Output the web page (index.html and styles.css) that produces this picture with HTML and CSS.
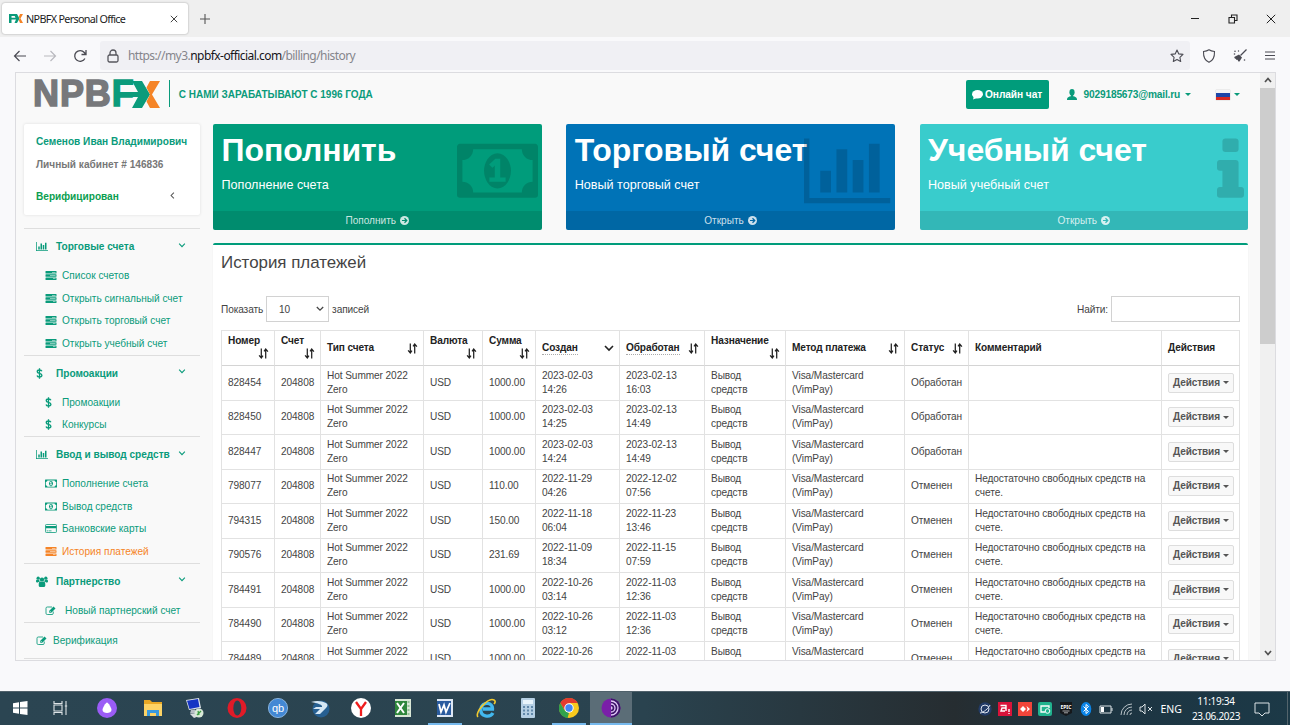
FILE: index.html
```html
<!DOCTYPE html>
<html lang="ru">
<head>
<meta charset="utf-8">
<title>NPBFX Personal Office</title>
<link rel="stylesheet" href="styles.css">
</head>
<body>
<svg class="defs" width="0" height="0">
  <symbol id="bars" viewBox="0 0 2048 1792"><path d="M640 896v512h-256v-512h256zm384-512v1024h-256v-1024h256zm1024 1152v128h-2048v-1536h128v1408h1920zm-640-896v768h-256v-768h256zm384-384v1152h-256v-1152h256z"/></symbol>
  <symbol id="money" viewBox="0 0 1920 1792"><path d="M768 1152h384v-96h-128v-448h-114l-148 137 77 80q42-37 55-57h2v288h-128v96zm512-256q0 70-21 142t-59.5 134-101.5 101-138 39-138-39-101.5-101-59.5-134-21-142 21-142 59.5-134 101.5-101 138-39 138 39 101.5 101 59.5 134 21 142zm512 256v-512q-106 0-181-75t-75-181h-1152q0 106-75 181t-181 75v512q106 0 181 75t75 181h1152q0-106 75-181t181-75zm128-832v1152q0 26-19 45t-45 19h-1792q-26 0-45-19t-19-45v-1152q0-26 19-45t45-19h1792q26 0 45 19t19 45z"/></symbol>
  <symbol id="info" viewBox="576 0 640 1792"><path d="M1216 1344v128q0 26-19 45t-45 19h-512q-26 0-45-19t-19-45v-128q0-26 19-45t45-19h64v-384h-64q-26 0-45-19t-19-45v-128q0-26 19-45t45-19h384q26 0 45 19t19 45v576h64q26 0 45 19t19 45zm-128-1152v192q0 26-19 45t-45 19h-256q-26 0-45-19t-19-45v-192q0-26 19-45t45-19h256q26 0 45 19t19 45z"/></symbol>
  <symbol id="tasks" viewBox="0 0 22 18"><rect width="22" height="5" rx="1"/><rect y="6.5" width="22" height="5" rx="1"/><rect y="13" width="22" height="5" rx="1"/><path d="M13 2h7v1.200h-7zM9 8.500h11v1.200H9zM15 15h5v1.200h-5z" fill="#f9f9f9"/></symbol>
  <symbol id="dollar" viewBox="0 0 10 16"><path d="M8.500 4.800C8 3.400 6.800 2.900 5 2.900 3 2.900 1.700 3.800 1.700 5.300 1.700 8.600 8.500 7 8.500 10.700c0 1.600-1.500 2.500-3.500 2.500-2 0-3.200-.7-3.600-2.300M5 .5v15" fill="none" stroke="currentColor" stroke-width="1.900"/></symbol>
  <symbol id="card" viewBox="0 0 22 17"><rect x=".8" y=".8" width="20.400" height="15.400" rx="1.600" fill="none" stroke="currentColor" stroke-width="1.600"/><path d="M1 4h20v4H1zM3 12.300h3v1.300H3zM7 12.300h5v1.300H7z"/></symbol>
  <symbol id="group" viewBox="0 0 22 20"><circle cx="11" cy="6.500" r="4"/><circle cx="4" cy="4" r="3"/><circle cx="18" cy="4" r="3"/><path d="M5 18v-3c0-3 1-5 3-5 2 1.500 4 1.500 6 0 2 0 3 2 3 5v3q0 2-2 2H7q-2 0-2-2zM0 10c0-2 .6-3.500 2-3.500 1 .8 3 1 4 .5C6 9 7 10 7 10c-2 .2-3 1-3.500 2H2Q0 12 0 10zM22 10c0-2-.6-3.500-2-3.500-1 .8-3 1-4 .5 0 2-1 3-1 3 2 .2 3 1 3.500 2H20q2 0 2-2z"/></symbol>
  <symbol id="edit" viewBox="0 0 22 18"><path d="M15.500 11v3.500q0 2.500-2.500 2.500H3.500Q1 17 1 14.500v-10Q1 2 3.500 2H13" fill="none" stroke="currentColor" stroke-width="1.700"/><path d="M7.500 9.500 16 1l4 4-8.500 8.500h-4z M9 10v2h2z" fill-rule="evenodd"/></symbol>
  <symbol id="go" viewBox="0 0 16 16"><circle cx="8" cy="8" r="8"/><path d="M3.500 8h8M8 4l4 4-4 4" fill="none" stroke="var(--hole)" stroke-width="2.200"/></symbol>
  <symbol id="down" viewBox="0 0 10 7"><path d="m1 1 4 4 4-4" fill="none" stroke="currentColor" stroke-width="1.600"/></symbol>
  <symbol id="sort" viewBox="0 0 20 20"><path d="M6 1v17M2 13.500 6 18l3-4M14 19V2M11 6l3-4 4 4.500" fill="none" stroke="currentColor" stroke-width="2.300"/></symbol>
</svg>

<div class="titlebar">
  <div class="tab">
    <svg class="favicon" viewBox="0 0 14 9"><path d="M0 0h8l2.500 4.500L8 9H5.500L7 5.500H2.500V9H0zM2.500 2v1.700h4L5.700 2z" fill="#0a9b7b" fill-rule="evenodd"/><path d="M11 0h3l-2.500 4.500L14 9h-3L9.800 6l.9-1.500L9.800 3z" fill="#f58427"/></svg>
    <span class="tab-title">NPBFX Personal Office</span>
    <svg class="tab-close" viewBox="0 0 8 8"><path d="m.8.800 6.400 6.400M7.200.8.800 7.200" stroke="#444" fill="none"/></svg>
  </div>
  <svg class="newtab" viewBox="0 0 10 10"><path d="M5 0v10M0 5h10" stroke="#555" stroke-width="1.100"/></svg>
  <div class="winbtns">
    <svg viewBox="0 0 10 10"><path d="M1 4.500h8" stroke="#222" fill="none"/></svg>
    <svg viewBox="0 0 10 10"><path d="M1 3.500h5.500V9H1zM3.500 3.500V1H9v5.500H6.500" stroke="#222" stroke-width="1.100" fill="none"/></svg>
    <svg viewBox="0 0 10 10"><path d="m.8.800 8.400 8.400M9.200.8.800 9.200" stroke="#222" fill="none"/></svg>
  </div>
</div>

<div class="toolbar">
  <svg class="nav" viewBox="0 0 14 12"><path d="M13 6H1.500M6.500 1l-5 5 5 5" stroke="#4b4b53" stroke-width="1.200" fill="none"/></svg>
  <svg class="nav" viewBox="0 0 14 12"><path d="M1 6h11.500M7.500 1l5 5-5 5" stroke="#b9b9be" stroke-width="1.200" fill="none"/></svg>
  <svg class="nav reload" viewBox="0 0 14 14"><path d="M11.900 9.500A5.400 5.400 0 1 1 11.300 3.500L12.500 5M13 1v4.500H8.500" stroke="#4b4b53" stroke-width="1.300" fill="none"/></svg>
  <div class="urlbar">
    <svg class="lock" viewBox="0 0 12 14"><rect x="1" y="6" width="10" height="7" rx="1.500" stroke="#55555c" stroke-width="1.300" fill="none"/><path d="M3 6V4a3 3 0 0 1 6 0v2" stroke="#55555c" stroke-width="1.300" fill="none"/></svg>
    <span class="url">https://my3.<b>npbfx-official.com</b>/billing/history</span>
    <svg class="star" viewBox="0 0 14 14"><path d="m7 1 1.800 3.900 4.200.5-3.100 2.900.8 4.200L7 10.500l-3.700 2 .8-4.200L1 5.400l4.200-.5z" stroke="#4b4b53" stroke-width="1.100" fill="none" stroke-linejoin="round"/></svg>
  </div>
  <svg class="tool" viewBox="0 0 14 14"><path d="M7 .8c1.500 1 3.500 1.500 5.500 1.700C12.700 8 11.500 11.500 7 13.300 2.500 11.500 1.300 8 1.500 2.500 3.500 2.300 5.500 1.800 7 .8z" stroke="#4b4b53" stroke-width="1.100" fill="none"/></svg>
  <svg class="tool" viewBox="0 0 14 14"><path d="m13.500.5-6 6" stroke="#4b4b53" stroke-width="1.200"/><path d="M6 5.500 9 8.500 6.500 12.500C5 12.500 4.500 12 5 10.500 4 11.500 3 11 3.200 10 2 10 1.500 9 1.200 8z" fill="#4b4b53"/><circle cx="2" cy="2.200" r=".8"/><circle cx="5.500" cy="2" r=".7"/><circle cx="1.500" cy="5" r=".8"/><circle cx="11.500" cy="11" r=".8"/></svg>
  <svg class="tool menu" viewBox="0 0 10 9"><path d="M0 1h10M0 4.500h10M0 8h10" stroke="#4b4b53"/></svg>
</div>

<div class="viewport">
  <div class="page">
    <header class="header">
      <div class="logo"><span class="npb">NPB</span><span class="f">F</span><svg viewBox="0 0 28 27"><path d="M0 0h10l8 13.500L10 27H0l6-11H-4v-5H6z" fill="#0a9b7b"/><path d="M18 0h10l-8 13.500L28 27H18l-3.500-6.500 3.500-7-3.500-7z" fill="#f58427"/></svg></div>
      <span class="slogan">С НАМИ ЗАРАБАТЫВАЮТ С 1996 ГОДА</span>
      <div class="userbar">
        <a class="chat"><svg viewBox="0 0 11 10"><ellipse cx="5.500" cy="4.300" rx="5.500" ry="4.200"/><path d="M2 6 1 9.500 5 8z"/></svg>Онлайн чат</a>
        <svg class="person" viewBox="0 0 10 11"><ellipse cx="5" cy="3.300" rx="2.600" ry="3.300"/><path d="M3.800 5h2.400v2.300c1.800.4 3.800 1 3.800 3.200v.5H0v-.5c0-2.200 2-2.800 3.800-3.200z"/></svg>
        <span class="mail">9029185673@mail.ru</span><i class="caret"></i>
        <span class="flag"></span><i class="caret"></i>
      </div>
    </header>

    <div class="columns">
      <aside class="sidebar">
        <div class="profile">
          <b class="name">Семенов Иван Владимирович</b>
          <b class="cab">Личный кабинет # 146836</b>
          <div class="verified"><b>Верифицирован</b><svg viewBox="0 0 7 10"><path d="M5.500 1 1.500 5l4 4" fill="none" stroke="#555" stroke-width="1.500"/></svg></div>
        </div>
        <nav>
          <section>
            <h4><svg><use href="#bars"/></svg>Торговые счета<svg class="chev"><use href="#down"/></svg></h4>
            <a><svg><use href="#tasks"/></svg>Список счетов</a>
            <a><svg><use href="#tasks"/></svg>Открыть сигнальный счет</a>
            <a><svg><use href="#tasks"/></svg>Открыть торговый счет</a>
            <a><svg><use href="#tasks"/></svg>Открыть учебный счет</a>
          </section>
          <section>
            <h4><svg class="usd"><use href="#dollar"/></svg>Промоакции<svg class="chev"><use href="#down"/></svg></h4>
            <a><svg class="usd"><use href="#dollar"/></svg>Промоакции</a>
            <a><svg class="usd"><use href="#dollar"/></svg>Конкурсы</a>
          </section>
          <section>
            <h4><svg><use href="#bars"/></svg>Ввод и вывод средств<svg class="chev"><use href="#down"/></svg></h4>
            <a><svg class="cash"><use href="#money"/></svg>Пополнение счета</a>
            <a><svg class="cash"><use href="#money"/></svg>Вывод средств</a>
            <a><svg><use href="#card"/></svg>Банковские карты</a>
            <a class="current"><svg><use href="#tasks"/></svg>История платежей</a>
          </section>
          <section>
            <h4><svg><use href="#group"/></svg>Партнерство<svg class="chev"><use href="#down"/></svg></h4>
            <a class="wide"><svg><use href="#edit"/></svg>Новый партнерский счет</a>
          </section>
          <section class="single"><a><svg><use href="#edit"/></svg>Верификация</a></section>
          <section class="single"></section>
        </nav>
      </aside>

      <main class="main">
        <div class="cards">
          <div class="card green"><div class="card-body"><h2>Пополнить</h2><p>Пополнение счета</p></div><div class="card-foot">Пополнить <svg><use href="#go"/></svg></div><svg class="big w-money"><use href="#money"/></svg></div>
          <div class="card blue"><div class="card-body"><h2>Торговый счет</h2><p>Новый торговый счет</p></div><div class="card-foot">Открыть <svg><use href="#go"/></svg></div><svg class="big w-bars"><use href="#bars"/></svg></div>
          <div class="card teal"><div class="card-body"><h2>Учебный счет</h2><p>Новый учебный счет</p></div><div class="card-foot">Открыть <svg><use href="#go"/></svg></div><svg class="big w-info"><use href="#info"/></svg></div>
        </div>

        <div class="box">
          <h3>История платежей</h3>
          <div class="filters">
            <span>Показать</span><span class="select">10<svg><use href="#down"/></svg></span><span>записей</span>
            <span class="find">Найти:</span><span class="input"></span>
          </div>
          <table>
            <colgroup><col class="c53"><col class="c46"><col class="c103"><col class="c59"><col class="c53"><col class="c84"><col class="c85"><col class="c81"><col class="c119"><col class="c64"><col class="c193"><col class="c78"></colgroup>
            <thead><tr>
              <th class="two">Номер<svg><use href="#sort"/></svg></th>
              <th class="two">Счет<svg><use href="#sort"/></svg></th>
              <th><div>Тип счета<svg><use href="#sort"/></svg></div></th>
              <th class="two">Валюта<svg><use href="#sort"/></svg></th>
              <th class="two">Сумма<svg><use href="#sort"/></svg></th>
              <th><div><u>Создан</u><svg class="desc"><use href="#down"/></svg></div></th>
              <th><div><u>Обработан</u><svg><use href="#sort"/></svg></div></th>
              <th class="two">Назначение<svg><use href="#sort"/></svg></th>
              <th><div>Метод платежа<svg><use href="#sort"/></svg></div></th>
              <th><div>Статус<svg><use href="#sort"/></svg></div></th>
              <th>Комментарий</th>
              <th>Действия</th>
            </tr></thead>
            <tbody>
              <tr><td>828454</td><td>204808</td><td>Hot Summer 2022<br>Zero</td><td>USD</td><td>1000.00</td><td>2023-02-03<br>14:26</td><td>2023-02-13<br>16:03</td><td>Вывод<br>средств</td><td>Visa/Mastercard<br>(VimPay)</td><td>Обработан</td><td></td><td><span class="btn">Действия<i class="caret"></i></span></td></tr>
              <tr><td>828450</td><td>204808</td><td>Hot Summer 2022<br>Zero</td><td>USD</td><td>1000.00</td><td>2023-02-03<br>14:25</td><td>2023-02-13<br>14:49</td><td>Вывод<br>средств</td><td>Visa/Mastercard<br>(VimPay)</td><td>Обработан</td><td></td><td><span class="btn">Действия<i class="caret"></i></span></td></tr>
              <tr><td>828447</td><td>204808</td><td>Hot Summer 2022<br>Zero</td><td>USD</td><td>1000.00</td><td>2023-02-03<br>14:24</td><td>2023-02-13<br>14:49</td><td>Вывод<br>средств</td><td>Visa/Mastercard<br>(VimPay)</td><td>Обработан</td><td></td><td><span class="btn">Действия<i class="caret"></i></span></td></tr>
              <tr><td>798077</td><td>204808</td><td>Hot Summer 2022<br>Zero</td><td>USD</td><td>110.00</td><td>2022-11-29<br>04:26</td><td>2022-12-02<br>07:56</td><td>Вывод<br>средств</td><td>Visa/Mastercard<br>(VimPay)</td><td>Отменен</td><td>Недостаточно свободных средств на<br>счете.</td><td><span class="btn">Действия<i class="caret"></i></span></td></tr>
              <tr><td>794315</td><td>204808</td><td>Hot Summer 2022<br>Zero</td><td>USD</td><td>150.00</td><td>2022-11-18<br>06:04</td><td>2022-11-23<br>13:46</td><td>Вывод<br>средств</td><td>Visa/Mastercard<br>(VimPay)</td><td>Отменен</td><td>Недостаточно свободных средств на<br>счете.</td><td><span class="btn">Действия<i class="caret"></i></span></td></tr>
              <tr><td>790576</td><td>204808</td><td>Hot Summer 2022<br>Zero</td><td>USD</td><td>231.69</td><td>2022-11-09<br>18:34</td><td>2022-11-15<br>07:59</td><td>Вывод<br>средств</td><td>Visa/Mastercard<br>(VimPay)</td><td>Отменен</td><td>Недостаточно свободных средств на<br>счете.</td><td><span class="btn">Действия<i class="caret"></i></span></td></tr>
              <tr><td>784491</td><td>204808</td><td>Hot Summer 2022<br>Zero</td><td>USD</td><td>1000.00</td><td>2022-10-26<br>03:14</td><td>2022-11-03<br>12:36</td><td>Вывод<br>средств</td><td>Visa/Mastercard<br>(VimPay)</td><td>Отменен</td><td>Недостаточно свободных средств на<br>счете.</td><td><span class="btn">Действия<i class="caret"></i></span></td></tr>
              <tr><td>784490</td><td>204808</td><td>Hot Summer 2022<br>Zero</td><td>USD</td><td>1000.00</td><td>2022-10-26<br>03:12</td><td>2022-11-03<br>12:36</td><td>Вывод<br>средств</td><td>Visa/Mastercard<br>(VimPay)</td><td>Отменен</td><td>Недостаточно свободных средств на<br>счете.</td><td><span class="btn">Действия<i class="caret"></i></span></td></tr>
              <tr><td>784489</td><td>204808</td><td>Hot Summer 2022<br>&nbsp;</td><td>USD</td><td>1000.00</td><td>2022-10-26<br>&nbsp;</td><td>2022-11-03<br>&nbsp;</td><td>Вывод<br>&nbsp;</td><td>Visa/Mastercard<br>&nbsp;</td><td>Отменен</td><td>Недостаточно свободных средств на<br>&nbsp;</td><td><span class="btn">Действия<i class="caret"></i></span></td></tr>
            </tbody>
          </table>
        </div>
      </main>
    </div>
  </div>
  <div class="scrollbar">
    <svg viewBox="0 0 8 6"><path d="m1 5 3-3.500L7 5" fill="none" stroke="#505050" stroke-width="1.700"/></svg>
    <div class="thumb"></div>
    <svg class="sdown" viewBox="0 0 8 6"><path d="m1 1 3 3.500L7 1" fill="none" stroke="#505050" stroke-width="1.700"/></svg>
  </div>
</div>

<div class="taskbar">
  <div class="task start"><svg viewBox="0 0 20 20"><path d="M3 5.200 9 4.300v5.200H3zM10 4.100 17.500 3v6.500H10zM3 10.500h6v5.200l-6-.9zM10 10.500h7.500V17L10 15.900z" fill="#fff"/></svg></div>
  <div class="task start"><svg viewBox="0 0 20 20"><path d="M4 3v2.500h8V3M4 17v-2.500h8V17M4 7h8v6H4zM16 3v14M14.800 8h2.400" fill="none" stroke="#dde3e6" stroke-width="1.100"/></svg></div>
  <div class="task first"><svg viewBox="0 0 20 20"><circle cx="10" cy="10" r="10" fill="#9b5cf6"/><path d="M10 4.500c1.300 0 4.500 5.500 4.500 7.500 0 4-9 4-9 0 0-2 3.200-7.500 4.500-7.500z" fill="#fff"/></svg></div>
  <div class="task"><svg viewBox="0 0 20 20"><path d="M1 2h6l2 2h10v14H1z" fill="#e9a825"/><path d="M1 6h18v12H1z" fill="#fdd365"/><path d="M4 18v-6h12v6h-3v-3H7v3z" fill="#3a9adf"/></svg></div>
  <div class="task"><svg viewBox="0 0 20 20"><path d="m1 2 13-2 2 10-12 2z" fill="#e0e5ec"/><path d="m2 2.800 11-1.700L14.500 9 4.500 10.900z" fill="#1635c4"/><path d="m6 12 4-.5 1 4H5z" fill="#b7bdc6"/><path d="m5 16 8-1 4 2-8 3z" fill="#d8dce0"/><circle cx="14" cy="15" r="4.500" fill="#d8e8d8"/><path d="m12 17 4-4m-3 0 1 4" stroke="#3c9c43" stroke-width="1.300"/></svg></div>
  <div class="task"><svg viewBox="0 0 20 20"><ellipse cx="10" cy="10" rx="9.500" ry="10" fill="#e11b28"/><ellipse cx="10.300" cy="10" rx="4" ry="7.500" fill="#2b4350"/></svg></div>
  <div class="task"><svg viewBox="0 0 20 20"><circle cx="10" cy="10" r="9.600" fill="#4388d4" stroke="#9cc6f1" stroke-width=".8"/><text x="10" y="13.500" class="qb">qb</text></svg></div>
  <div class="task"><svg viewBox="0 0 20 20"><circle cx="11" cy="11" r="8.500" fill="#265f91"/><path d="M1 4c6-2 11-1 15 1 2 1 2 3 0 5l-6 6H5l5-5H3l3-2h6c1-2-4-4-11-5z" fill="#d5e7f5"/></svg></div>
  <div class="task"><svg viewBox="0 0 20 20"><circle cx="10" cy="10" r="10" fill="#fff"/><path d="m5 4 5 7 5-7M10 10.500V18" fill="none" stroke="#ef1d1d" stroke-width="2.300"/></svg></div>
  <div class="task"><svg viewBox="0 0 20 20"><path d="M2 1h16v18H2z" fill="#d9e7d6"/><path d="M2 3h12v14H2z" fill="#2f873c"/><path d="m4 5 7 10M11 5 4 15" stroke="#fff" stroke-width="2"/><path d="M14.500 4h2m-2 4h2m-2 4h2m-2 4h2" stroke="#4f9d58"/></svg></div>
  <div class="task open"><svg viewBox="0 0 20 20"><path d="M2 1h16v18H2z" fill="#dde7f4"/><path d="M2 3h14v14H2z" fill="#295b9f"/><path d="m4 6 2 8 3-7 2 7 4-9" fill="none" stroke="#fff" stroke-width="1.800"/></svg></div>
  <div class="task"><svg viewBox="0 0 20 20"><path d="M17 15c-3 5-13 4-12-4C6 3 17 4 16.500 11H7" fill="none" stroke="#42b8ef" stroke-width="3.300"/><path d="M2 19C-2 15 12-1 18 2c2 1 1 3 0 4" fill="none" stroke="#f2c92e" stroke-width="1.600"/></svg></div>
  <div class="task"><svg viewBox="0 0 20 20"><rect x="3" width="14" height="20" rx="1" fill="#b5cfe3"/><path d="M5 2h10v4H5z" fill="#e8f4fb"/><path d="M5 9h10M5 12.500h10M5 16h10" stroke="#6289aa" stroke-width="2" stroke-dasharray="2 2"/></svg></div>
  <div class="task open"><svg viewBox="0 0 20 20"><circle cx="10" cy="10" r="10" fill="#f9c91e"/><path d="M1.300 5A10 10 0 0 1 18.700 5H10L5.700 12.500z" fill="#e33b2e"/><path d="M1.300 5 5.700 12.500 10 15l-1.500 5A10 10 0 0 1 1.300 5z" fill="#31a24c"/><circle cx="10" cy="10" r="4.700" fill="#fff"/><circle cx="10" cy="10" r="3.700" fill="#4285f4"/></svg></div>
  <div class="task open active"><svg viewBox="0 0 20 20"><circle cx="10" cy="10" r="9.500" fill="#7a1fa8"/><path d="M10 .5a9.500 9.500 0 0 1 0 19z" fill="#3d1568"/><path d="M10 3a7 7 0 0 1 0 14M10 6a4 4 0 0 1 0 8M10 9a1 1 0 0 1 0 2" fill="none" stroke="#e5c8fb" stroke-width="1.300"/></svg></div>
  <div class="tray">
    <svg viewBox="0 0 14 14"><circle cx="7" cy="7" r="6.700" fill="#223b66"/><circle cx="7" cy="7" r="4" fill="none" stroke="#dce3ee"/><path d="M2 11C5 11 11 6 12 3" stroke="#dce3ee" fill="none"/></svg>
    <svg viewBox="0 0 14 14"><path d="M0 0h14v14H0z" fill="#d8133a"/><path d="M2.500 3.500H8V9M8 6H4l-1 3h4M11 7v3M11 11v1" stroke="#fff" stroke-width="1.400" fill="none"/></svg>
    <svg viewBox="0 0 14 14"><path d="M0 0h14v14H0z" fill="#f2453a"/><path d="m5 4 3 3-3 3-3-3zM8.500 4 12 7l-3.500 3 1-3z" fill="#fff"/></svg>
    <svg viewBox="0 0 14 14"><rect width="14" height="14" rx="2" fill="#21b38e"/><path d="M7 10H3V4h8v2" stroke="#fff" stroke-width="1.300" fill="none"/><circle cx="9.500" cy="9" r="2.300" fill="#21b38e" stroke="#fff"/></svg>
    <svg viewBox="0 0 14 14"><path d="M1 0h12v11l-6 3-6-3z" fill="#15181b"/><text x="7" y="6.500" class="epic">EPIC</text><path d="M3.500 9h7M5 10.800h4" stroke="#ccc" stroke-width=".8"/></svg>
    <svg viewBox="0 0 14 14"><ellipse cx="7" cy="7" rx="5.300" ry="7" fill="#0a84e8"/><path d="m4.500 4.500 5 5L7 11.500v-9l2.500 2-5 5" stroke="#fff" fill="none"/></svg>
    <svg viewBox="0 0 14 14"><path d="M1 4h11v7H1zM13 6v3" stroke="#dbe2e5" fill="none"/><path d="M2 5h3v5H2z" fill="#fff"/></svg>
    <svg viewBox="0 0 14 14"><path d="M2 13A11 11 0 0 1 13 2M5 13a8 8 0 0 1 8-8M8 13a5 5 0 0 1 5-5M11 13a2 2 0 0 1 2-2" stroke="#b7c1c6" fill="none"/></svg>
    <svg viewBox="0 0 14 14"><path d="M1 5h2l3-3v10L3 9H1zM9 5l4 4M13 5 9 9" stroke="#dbe2e5" fill="none"/></svg>
    <span class="lang">ENG</span>
    <span class="clock">11:19:34<br>23.06.2023</span>
    <svg class="note" viewBox="0 0 16 16"><path d="M1 2h14v10H11l-3 3-3-3H1z" stroke="#dbe2e5" fill="none"/></svg>
  </div>
</div>
</body>
</html>
```
FILE: styles.css
```css
* { box-sizing: border-box; }
body { margin: 0; width: 1290px; height: 725px; overflow: hidden; background: #f9f9fb; font-family: "Liberation Sans", Arial, sans-serif; font-size: 10.1px; color: #444; display: flex; flex-direction: column; }
svg { fill: currentColor; display: block; flex: none; }
.defs { position: absolute; }
h2, h3, h4, p { margin: 0; }

.titlebar { height: 37px; background: #efefef; display: flex; align-items: center; font-family: "Noto Sans", sans-serif; flex: none; }
.tab { width: 186px; height: 31px; margin-left: 2px; background: #fff; border-radius: 3px; box-shadow: 0 0 2px #999; display: flex; align-items: center; padding: 0 10px 0 7px; }
.favicon { width: 14px; height: 9px; margin-right: 3px; }
.tab-title { font-size: 10.8px; color: #222; white-space: nowrap; letter-spacing: -.68px; flex: 1; }
.tab-close { width: 8px; height: 8px; }
.newtab { width: 10px; height: 10px; margin-left: 12px; }
.winbtns { margin-left: auto; display: flex; gap: 28px; padding-right: 14px; }
.winbtns svg { width: 10px; height: 10px; }

.toolbar { height: 35px; flex: none; display: flex; align-items: center; padding: 2px 0 0 13px; color: #4b4b53; }
.nav { width: 14px; height: 12px; margin-right: 16px; }
.nav.reload { height: 14px; margin-right: 13px; }
.urlbar { width: 1090px; height: 29px; background: #f0f0f4; border-radius: 3px; display: flex; align-items: center; padding: 0 6px 0 7px; }
.lock { width: 12px; height: 14px; margin-right: 9px; }
.url { font-family: "Noto Sans", sans-serif; font-size: 12px; color: #85858b; flex: 1; letter-spacing: -.55px; }
.url b { font-weight: 400; color: #15141a; }
.star { width: 14px; height: 14px; }
.tool { width: 14px; height: 14px; margin-left: 12px; }
.tool + .tool { margin-left: 17px; }
.tool.menu { width: 10px; height: 9px; margin-left: 18px; }

.viewport { width: 1261px; height: 589px; margin-left: 15px; flex: none; border: 1px solid #dcdce0; display: flex; overflow: hidden; }
.page { flex: 1; background: #f9f9f9; overflow: hidden; }
.scrollbar { width: 15px; background: #f0f0f0; display: flex; flex-direction: column; align-items: center; padding: 4px 0; }
.scrollbar svg { width: 8px; height: 6px; }
.thumb { width: 15px; height: 256px; background: #cdcdcd; margin-top: 5px; }
.sdown { margin-top: auto; }

.header { height: 51px; display: flex; align-items: flex-start; padding: 7px 20px 0 17px; color: #0a9b7b; }
.logo { display: flex; height: 28px; align-items: center; line-height: 28px; font-size: 36px; font-weight: 700; letter-spacing: .9px; -webkit-text-stroke: 1.5px currentColor; }
.npb { color: #77787b; }
.f { width: 20px; }
.logo svg { width: 28px; height: 27px; -webkit-text-stroke: 0; overflow: visible; }
.slogan { border-left: 1px solid #0a9b7b; height: 27px; line-height: 29px; margin-left: 9px; padding-left: 9px; font-size: 10px; font-weight: 700; white-space: nowrap; }
.userbar { margin-left: auto; height: 29px; display: flex; align-items: center; font-weight: 700; font-size: 10.2px; letter-spacing: -.2px; }
.chat { width: 83px; height: 29px; background: #009c7b; color: #fff; border-radius: 2px; display: flex; align-items: center; justify-content: center; gap: 2px; white-space: nowrap; letter-spacing: -.08px; }
.chat svg { width: 11px; height: 10px; }
.person { width: 10px; height: 11px; margin: 0 7px 0 18px; }
.caret { display: inline-block; border: 3.5px solid transparent; border-top-color: currentColor; border-bottom: 0; margin-left: 4.5px; }
.flag { width: 14px; height: 10px; margin-left: 25px; background: linear-gradient(#f5f5f5 33%, #1e46a8 33% 66%, #d82a22 66%); box-shadow: 0 0 1px #aaa; }

.columns { display: flex; padding-left: 8px; align-items: flex-start; }
.sidebar { width: 176px; margin-right: 13px; color: #0a9b7b; }
.profile { height: 91px; background: #fff; border-radius: 2px; box-shadow: 0 0 3px #ddd; padding: 10px 12px; margin-bottom: 13px; display: flex; flex-direction: column; font-size: 10.1px; white-space: nowrap; }
.profile b { line-height: 15px; }
.profile .cab { color: #777; margin: 8px 0 17px; }
.verified { display: flex; justify-content: space-between; color: #0a9e50; padding-right: 13px; }
.verified svg { width: 5px; height: 7px; margin-top: 3px; }
section { border-top: 1px solid #dedede; }
h4 { height: 35px; display: flex; align-items: center; padding: 0 14px 0 12px; font-size: 10.1px; letter-spacing: -.02px; white-space: nowrap; }
h4 svg { width: 12px; height: 11px; margin-right: 8px; }
h4 .chev { width: 8px; height: 5px; margin: 0 0 3px auto; }
h4 svg.usd { width: 7px; height: 11px; margin-right: 13px; }
section a { display: flex; align-items: center; height: 22.7px; padding-left: 21px; font-size: 10.1px; white-space: nowrap; }
section a svg { width: 12px; height: 9px; margin-right: 5px; }
section a svg.cash { height: 11.2px; }
section a svg.usd { width: 7px; height: 11px; margin-right: 10px; }
section a.wide svg { margin-right: 8px; }
section a.current { color: #f58427; }
section.single a { height: 35px; padding-left: 12px; }

.main { width: 1035px; }
.cards { display: flex; justify-content: space-between; margin-bottom: 13px; }
.card { position: relative; width: 328.5px; height: 106px; border-radius: 2px; color: #fff; overflow: hidden; display: flex; flex-direction: column; }
.green { background: #009c7b; --hole: #008c6f; }
.blue { background: #0073b7; --hole: #0067a5; }
.teal { background: #39cccc; --hole: #33b8b8; }
.card-body { flex: 1; padding: 8px 8.5px; white-space: nowrap; }
.card h2 { font-size: 32px; line-height: 36px; letter-spacing: -.05px; }
.card p { font-size: 12.6px; line-height: 16px; margin-top: 9px; }
.card-foot { height: 19.5px; background: rgba(0, 0, 0, .1); color: rgba(255, 255, 255, .8); display: flex; align-items: center; justify-content: center; gap: 4px; font-size: 10.1px; }
.card-foot svg { width: 9px; height: 9px; }
.big { position: absolute; right: 4px; top: 9px; height: 75.7px; color: rgba(0, 0, 0, .15); }
.w-money { width: 81px; }
.w-bars { width: 86.5px; }
.w-info { width: 27px; }

.box { background: #fff; border-top: 2px solid #009c7b; border-radius: 2px; box-shadow: 0 1px 1px #ddd; padding: 0 8px; height: 440px; }
h3 { font-size: 16.9px; font-weight: 400; line-height: 20px; padding-top: 8px; margin-bottom: 23px; }
.filters { height: 26px; display: flex; align-items: center; gap: 3px; margin-bottom: 8px; font-size: 10.1px; letter-spacing: -.1px; }
.select { width: 63px; height: 26px; border: 1px solid #d2d2d2; display: flex; align-items: center; justify-content: space-between; padding: 0 4px 0 12px; }
.select svg { width: 8px; height: 6px; }
.find { margin-left: auto; }
.input { width: 129px; height: 26px; border: 1px solid #d2d2d2; }

table { width: 1019px; table-layout: fixed; border-collapse: separate; border-spacing: 0; border-top: 1px solid #e2e2e2; border-left: 1px solid #e2e2e2; line-height: 14px; white-space: nowrap; }
.c46 { width: 46px; } .c103 { width: 103px; } .c59 { width: 59px; }
.c53 { width: 53px; } .c84 { width: 84px; } .c85 { width: 85px; } .c81 { width: 81px; }
.c119 { width: 119px; } .c64 { width: 64px; } .c193 { width: 193px; } .c78 { width: 78px; }
th, td { border: 0 solid #e2e2e2; border-width: 0 1px 1px 0; padding: 0 0 0 6px; text-align: left; vertical-align: middle; height: 34.5px; }
td { letter-spacing: -.08px; }
th { height: 35px; border-bottom-color: #d4d4d4; color: #222; padding-right: 5px; letter-spacing: -.12px; }
th svg { width: 11px; height: 11px; color: #222; }
th.two svg { margin: 1px 0 0 auto; }
th.two { line-height: 13px; padding-bottom: 4px; }
th div { display: flex; justify-content: space-between; align-items: center; }
th .desc { width: 10px; height: 7px; }
th u { text-decoration: none; border-bottom: 1px dotted #aaa; line-height: 12px; }
.btn { display: inline-flex; align-items: center; justify-content: center; width: 66px; height: 20px; border: 1px solid #ddd; border-radius: 2px; background: #f8f8f8; color: #555; font-weight: 700; vertical-align: middle; font-size: 10.1px; letter-spacing: -.15px; }
.btn .caret { margin-left: 3px; }

.taskbar { height: 34px; margin-top: 30px; flex: none; display: flex; background: linear-gradient(90deg, #2b4552, #2a434f 50%, #262d31 74%, #1d3441 84%, #1c3947); border-top: 1px solid #50616b; }
.task { width: 41.6px; display: flex; align-items: center; justify-content: center; border-bottom: 2px solid transparent; }
.task svg { width: 20px; height: 20px; }
.task.start { width: 40px; }
.task.first { margin: 0 5px 0 6px; }
.task.open { border-bottom-color: #76b9ed; background-clip: padding-box; width: 34px; margin: 0 3.8px; }
.task.active { background: #5b6d77; width: 41.6px; margin: 0; }
.qb { font-size: 11px; fill: #fff; text-anchor: middle; }
.epic { font-size: 5px; font-weight: 700; fill: #fff; text-anchor: middle; }
.tray { margin-left: auto; display: flex; align-items: center; color: #fff; border-right: 1px solid #53646c; margin-right: 2px; padding-right: 17px; font-family: "Noto Sans", sans-serif; }
.tray svg { width: 14px; height: 14px; margin-right: 6.2px; }
.lang { font-size: 10.5px; margin: 0 9px 0 1px; }
.clock { font-size: 10px; line-height: 15px; text-align: center; width: 50px; letter-spacing: -.3px; white-space: nowrap; }
.tray svg.note { width: 16px; height: 16px; margin: 0 0 0 13px; }
```
